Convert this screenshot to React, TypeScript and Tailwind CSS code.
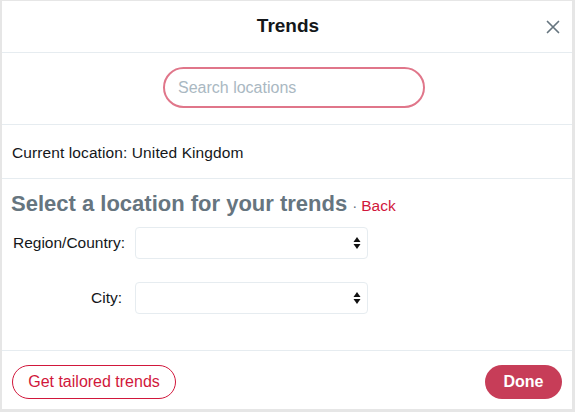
import React from "react";

function Arrows() {
  return (
    <svg width="8" height="14" viewBox="0 0 8 14" className="text-[#111]">
      <path d="M4 1 L7.5 6 L0.5 6 Z" fill="currentColor" />
      <path d="M4 13 L7.5 8 L0.5 8 Z" fill="currentColor" />
    </svg>
  );
}

function SelectBox() {
  return (
    <div className="w-[233px] h-[32px] border border-[#e6ecf0] rounded-[4px] bg-white flex items-center justify-end pr-[6px]">
      <Arrows />
    </div>
  );
}

export default function App() {
  return (
    <div
      className="w-[575px] h-[412px] bg-[#e6e6e6] pt-[1px] pl-[2px] pr-[3px] pb-[3px]"
      style={{ fontFamily: '"Liberation Sans", Arial, sans-serif' }}
    >
      <div className="bg-white h-full flex flex-col">
        <div className="h-[52px] flex items-center justify-center relative border-b border-[#e6ecf0]">
          <div className="text-[19px] font-bold text-[#14171a] ml-[2px]">Trends</div>
          <svg
            className="absolute right-[11px] top-[18px]"
            width="16"
            height="16"
            viewBox="0 0 16 16"
          >
            <path d="M2.5 2.5 L13.5 13.5 M13.5 2.5 L2.5 13.5" stroke="#66757f" strokeWidth="1.7" strokeLinecap="round" />
          </svg>
        </div>
        <div className="h-[72px] flex items-center justify-center border-b border-[#e6ecf0]">
          <div className="w-[262px] h-[41px] rounded-full border-2 border-[#e0768a] flex items-center px-[13px] mt-[-2px] ml-[14px]">
            <span className="text-[16px] text-[#aab8c2]">Search locations</span>
          </div>
        </div>
        <div className="h-[54px] flex items-center px-[10px] pt-[2px] border-b border-[#e6ecf0]">
          <span className="text-[15.5px] tracking-[0.1px] text-[#14171a]">Current location: United Kingdom</span>
        </div>
        <div className="flex-1 flex flex-col px-[9px] pt-[8px] border-b border-[#e6ecf0]">
          <div className="flex items-baseline">
            <span className="text-[22px] font-bold text-[#66757f]">Select a location for your trends</span>
            <span className="text-[15px] text-[#66757f] ml-[5px]">·</span>
            <span className="text-[15.5px] text-[#d1173b] ml-[4px]">Back</span>
          </div>
          <div className="flex items-center mt-[7px]">
            <div className="w-[114px] text-right text-[15.5px] text-[#14171a]">Region/Country:</div>
            <div className="ml-[10px]"><SelectBox /></div>
          </div>
          <div className="flex items-center mt-[23px]">
            <div className="w-[111px] text-right text-[15.5px] text-[#14171a]">City:</div>
            <div className="ml-[13px]"><SelectBox /></div>
          </div>
        </div>
        <div className="h-[58px] flex items-start justify-between px-[10px] pt-[14px]">
          <div className="h-[34px] w-[164px] rounded-full border border-[#d1173b] flex items-center justify-center text-[16px] text-[#d1173b]">
            Get tailored trends
          </div>
          <div className="h-[34px] w-[77px] rounded-full bg-[#c73d58] flex items-center justify-center text-[16px] font-bold text-white">
            Done
          </div>
        </div>
      </div>
    </div>
  );
}
